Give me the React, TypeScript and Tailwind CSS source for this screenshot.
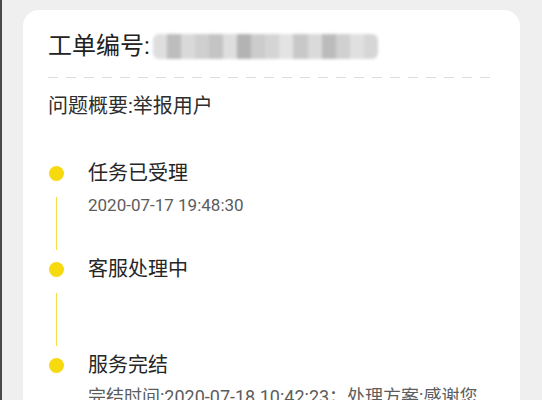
import React from 'react';

type Step = {
  title: string;
  detail?: string;
  detailClass?: string;
  last?: boolean;
};

const steps: Step[] = [
  { title: '任务已受理', detail: '2020-07-17 19:48:30', detailClass: 'text-[17px]' },
  { title: '客服处理中' },
  {
    title: '服务完结',
    detail: '完结时间:2020-07-18 10:42:23；处理方案:感谢您的反馈，我们已对该用户进行处理。',
    detailClass: 'text-[18px]',
    last: true,
  },
];

// blurred ticket number, drawn as a soft mosaic
const mosaic = [
  '#dedede', '#bdbdbd', '#d9d9d9', '#cfcfcf', '#c4c4c4', '#dedede', '#b3b3b3', '#cccccc',
  '#d4d4d4', '#e3e3e3', '#c8c8c8', '#dadada', '#bcbcbc', '#d0d0d0', '#e0e0e0', '#d6d6d6',
];

const BlurredNumber: React.FC = () => (
  <div className="ml-[3px] flex h-[25px] w-[225px] overflow-hidden rounded-[6px] blur-[1.5px]">
    {mosaic.map((c, i) => (
      <div key={i} className="flex-1" style={{ backgroundColor: c }} />
    ))}
  </div>
);

export default function App() {
  return (
    <div
      className="h-[400px] w-[542px] overflow-hidden border-l-2 border-[#4a4a4a] bg-[#efefef] pt-[10px]"
      style={{ fontFamily: 'Roboto, "Noto Sans CJK SC", sans-serif' }}
    >
      <div className="ml-[21px] w-[497px] rounded-2xl bg-white px-[25px] pt-[20px] pb-6">
        <div className="flex h-[32px] items-center">
          <span className="text-[24px] leading-[32px] text-[#222222]">工单编号:</span>
          <BlurredNumber />
        </div>

        <div className="mt-[15px] h-px w-full bg-[repeating-linear-gradient(to_right,#dcdcdc_0,#dcdcdc_10px,transparent_10px,transparent_18px)]" />

        <div className="mt-[14px] text-[20px] leading-[28px] text-[#2e2e2e]">问题概要:举报用户</div>

        <div className="mt-[37px] flex flex-col">
          {steps.map((s) => (
            <div key={s.title} className="flex min-h-[96px] gap-[24px]">
              <div className="flex w-[16px] flex-col items-center pt-[8.5px]">
                <div className="h-[15px] w-[15px] rounded-full bg-[#f6da0e]" />
                {!s.last && <div className="mt-[16px] h-[53px] w-px bg-[#f3df4a]" />}
              </div>
              <div className="flex-1">
                <div className="text-[20px] leading-[32px] text-[#262626]">{s.title}</div>
                {s.detail && (
                  <div className={`mt-1 leading-[24px] text-[#5c5c5c] ${s.detailClass}`}>{s.detail}</div>
                )}
              </div>
            </div>
          ))}
        </div>
      </div>
    </div>
  );
}
